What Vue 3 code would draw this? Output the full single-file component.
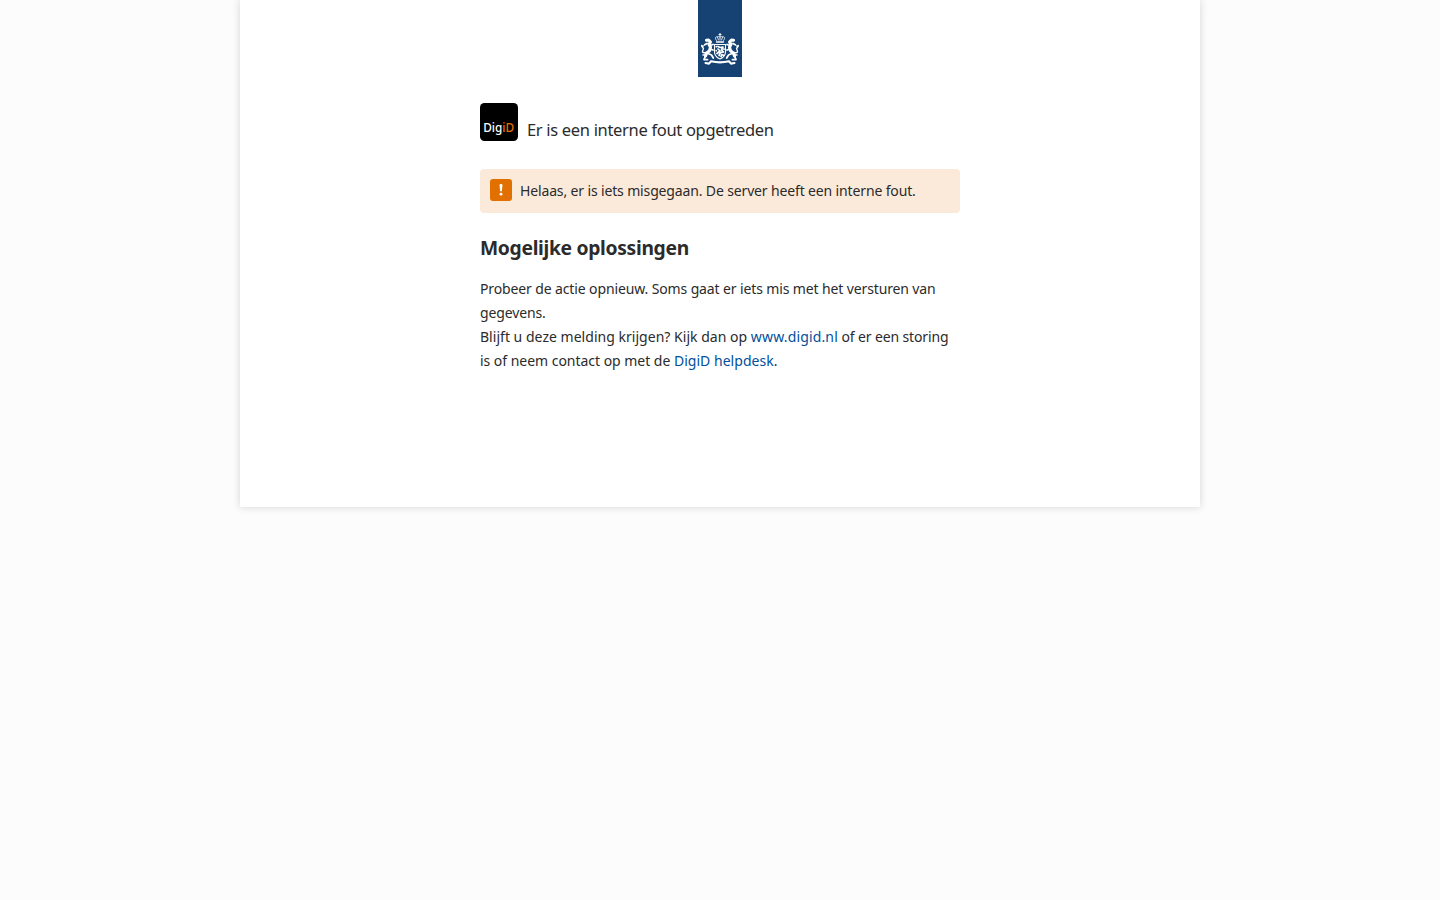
<script setup>
</script>

<template>
  <div class="page">
    <header class="ribbon">
      <svg width="44" height="77" viewBox="0 0 44 77" role="img" aria-label="Rijksoverheid">
        <rect width="44" height="77" fill="#154273" />
        <g fill="none" stroke="#fff" stroke-linecap="round" stroke-linejoin="round">
          <path d="M22 33.500v2.500M21 34.500h2" stroke-width="1" />
          <path d="M18.500 40.500C15.500 37 18.500 36 22 37c3.500-1 6.500 0 3.500 3.500M22 37v3M19.500 37.500l1 2.500M24.500 37.500l-1 2.500" stroke-width=".85" />
          <path d="M18.500 42h7" stroke-width="1.400" />
          <path d="M16.500 44.500h11v7.500c0 4-3 6-5.500 7-2.500-1-5.500-3-5.500-7z" stroke-width="1.100" />
          <path d="M20 46.500l2 1 3-.5-1.500 3 2 2-3 .5-1.500 3M20 49l2 2-3 2.500M24 54.500l-1 2M18.300 46.500v.2M18.200 50.500v.2M26 49v.2M25.500 55v.2" stroke-width="1.700" />
          <g v-for="side in ['', 'translate(44 0) scale(-1 1)']" :key="side" :transform="side">
            <path d="M8.500 40.300l2-.3 2 2-1.500 2.300 1.500 3-1 3.500-3 2.500-1 2.500" stroke-width="3.100" />
            <path d="M12 45.500l3-1M12 49l3 1M9 43.500l-2.300 1.300M10 53.500l3.500 1.500 1.800 3M7.500 56l-1.500 3.500 3.500.2" stroke-width="1.800" />
            <path d="M8 52.500c-4 1-4-1-2.800-3s-1.700-2-1.500-4M3.800 46h1.500M5 55h2" stroke-width="1.400" />
          </g>
          <path d="M7.500 63l3.500.6 2-2.300c5 1.200 13 1.200 18 0l2 2.300 3.500-.6" stroke-width="2.100" />
        </g>
      </svg>
    </header>
    <main class="content">
      <div class="title">
        <svg class="logo" width="38" height="38" viewBox="0 0 38 38" role="img" aria-label="DigiD">
          <rect width="38" height="38" rx="4.500" fill="#000" />
          <text x="3.200" y="29" textLength="31" lengthAdjust="spacingAndGlyphs" fill="#fff"><tspan class="strong">Dig</tspan><tspan fill="#e17000">iD</tspan></text>
        </svg>
        <h1>Er is een interne fout opgetreden</h1>
      </div>
      <div class="alert">
        <svg width="22" height="22" viewBox="0 0 22 22" aria-hidden="true">
          <rect width="22" height="22" rx="3" fill="#e17000" />
          <path d="M9.500 5.500q1.500-.8 3 0L11.900 12.300h-1.800z" fill="#fff" />
          <circle cx="11" cy="15.200" r="1.400" fill="#fff" />
        </svg>
        <p>Helaas, er is iets misgegaan. De server heeft een interne fout.</p>
      </div>
      <h2>Mogelijke oplossingen</h2>
      <p class="copy">
        <span class="line first">Probeer de actie opnieuw. Soms gaat er iets mis met het versturen van</span>
        <span class="line first">gegevens.</span>
        <span class="line third">Blijft u deze melding krijgen? Kijk dan op <a class="site" href="#">www.digid.nl</a><span class="tail"> of er een storing</span></span>
        <span class="line fourth">is of neem contact op met de <a href="#">DigiD helpdesk</a>.</span>
      </p>
    </main>
  </div>
</template>

<style>
body { background: #fcfcfc; }
#app { min-height: 100vh; }
</style>

<style scoped>
.page {
  box-sizing: border-box;
  width: 960px;
  height: 507px;
  margin: 0 auto;
  background: #fff;
  box-shadow: 0 0 8px rgba(0, 0, 0, 0.16);
  color: #2b2b2b;
  font-family: "Noto Sans", "Open Sans", sans-serif;
  font-size: 14px;
  line-height: 24px;
}
.ribbon { display: flex; justify-content: center; height: 77px; }
.ribbon svg { display: block; }
.content { width: 480px; margin: 0 auto; padding-top: 26px; }
.title { display: flex; height: 38px; gap: 9px; }
.logo { display: block; flex: none; }
.logo text { font: 500 12px "Noto Sans", sans-serif; }
.logo .strong { font-weight: 500; }
h1 { margin: 15px 0 0; font-size: 16.5px; line-height: 24px; font-weight: 400; letter-spacing: -0.32px; white-space: nowrap; }
.alert { display: flex; box-sizing: border-box; height: 44px; margin-top: 28px; padding: 10px; gap: 8px; border-radius: 4px; background: #fbeada; }
.alert svg { flex: none; }
.alert p { margin: 0; white-space: nowrap; letter-spacing: -0.143px; }
h2 { margin: 21px 0 0; font-size: 19.3px; line-height: 28px; font-weight: 700; letter-spacing: -0.32px; white-space: nowrap; }
.copy { margin: 15px 0 0; }
.line { display: block; white-space: nowrap; }
.first { letter-spacing: -0.125px; }
.third { letter-spacing: 0.025px; }
.fourth { letter-spacing: -0.03px; }
.site { letter-spacing: 0.15px; }
.tail { letter-spacing: -0.13px; }
.fourth a { letter-spacing: 0.03px; }
a { color: #01509b; text-decoration: none; }
</style>
